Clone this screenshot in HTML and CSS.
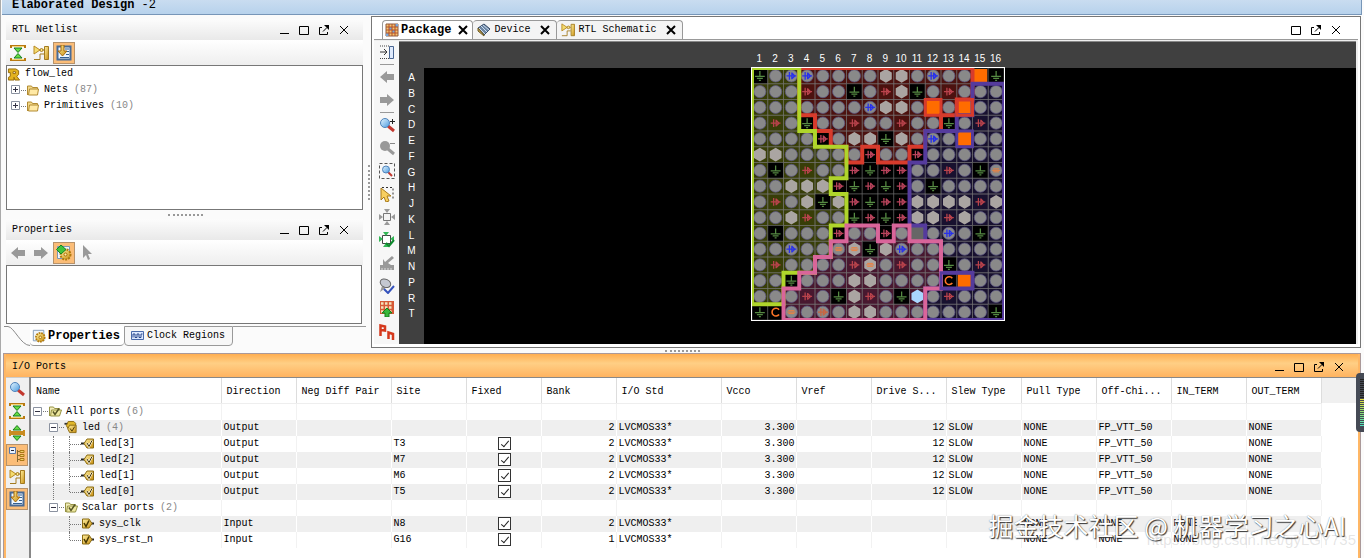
FILE: index.html
```html
<!DOCTYPE html>
<html lang="en">
<head>
<meta charset="utf-8">
<title>Elaborated Design</title>
<link rel="stylesheet" href="styles.css">
</head>
<body>
<svg class="defs" aria-hidden="true">
  <defs>
    <linearGradient id="gold" x1="0" y1="0" x2="1" y2="1"><stop offset="0" stop-color="#fff0a0"/><stop offset="1" stop-color="#c98f12"/></linearGradient>
    <linearGradient id="lens" x1="0" y1="0" x2="1" y2="1"><stop offset="0" stop-color="#e6f6ff"/><stop offset="1" stop-color="#4b9be0"/></linearGradient>
  </defs>
  <symbol id="min" viewBox="0 0 12 12"><path d="M2 9.500h9" stroke="#000"/></symbol>
  <symbol id="max" viewBox="0 0 12 12"><path d="M1.500 2.500h9v8h-9z" fill="none" stroke="#000"/></symbol>
  <symbol id="pop" viewBox="0 0 12 12"><path d="M4 3.500H1.500v7h8V8M5 7.500l4-4" fill="none" stroke="#000"/><path d="M6 1h5v5z"/></symbol>
  <symbol id="close" viewBox="0 0 12 12"><path d="M2 2l8 8M10 2l-8 8" stroke="#000"/></symbol>
  <symbol id="closeb" viewBox="0 0 12 12"><path d="M2 2l8 8M10 2l-8 8" stroke="#000" stroke-width="2"/></symbol>
  <symbol id="collapse" viewBox="0 0 16 16"><path d="M1 3V1h14v2M1 13v2h14v-2" fill="none" stroke="#b87912" stroke-width="2"/><path d="M2 1.500h12M2 14.500h12" stroke="#f8d775"/><path d="M4 3h8L8 7.500zM4 13h8L8 8.500z" fill="#65dc43" stroke="#187d1e"/></symbol>
  <symbol id="expand" viewBox="0 0 16 16"><path d="M1 5v2h14V5M1 11V9h14v2" fill="none" stroke="#c98c22" stroke-width="2"/><path d="M4 5h8L8 .5zM4 11h8l-4 4.500z" fill="#65dc43" stroke="#187d1e"/></symbol>
  <symbol id="schem" viewBox="0 0 16 16"><path d="M7 5h4M1 14.500h6V9h4" fill="none" stroke="#a37b20"/><path d="M1 1v8l6-4z" fill="#f4dc71" stroke="#b88922"/><circle cx="8.500" cy="5" r="1.500" fill="#ffe98c" stroke="#a37b20"/><path d="M11.500 1.500h4v13h-4z" fill="url(#gold)" stroke="#a37b20"/></symbol>
  <symbol id="autofit" viewBox="0 0 16 16"><path d="M1.500 1.500h13v13h-13z" fill="#edf6ff" stroke="#486b96" stroke-width="2"/><path d="M9 4h4M9 6.500h4M4 12.500h9M10 9.500h3" stroke="#345f91"/><path d="M5 0h3v6h3L6.500 11 2 6h3z" fill="url(#gold)" stroke="#a86808"/></symbol>
  <symbol id="left" viewBox="0 0 16 16"><path d="M1 8l7-6v3h7v6H8v3z" fill="#999"/></symbol>
  <symbol id="right" viewBox="0 0 16 16"><path d="M15 8L8 2v3H1v6h7v3z" fill="#999"/></symbol>
  <symbol id="pointer" viewBox="0 0 16 16"><path d="M4 0v13l3-3 2 5 2-1-2-5h4z" fill="#999"/></symbol>
  <symbol id="gear" viewBox="0 0 16 16"><path d="M1.500 1.500h12v12h-12z" fill="#eff5fc" stroke="#7c96b4"/><circle cx="9.500" cy="9.500" r="5" fill="url(#gold)" stroke="#b37a0d" stroke-width="2" stroke-dasharray="2 1"/><circle cx="9.500" cy="9.500" r="1.500" fill="#fff3b0" stroke="#a76c08"/></symbol>
  <symbol id="gearon" viewBox="0 0 16 16"><use href="#gear"/><path d="M5 0l5 4.500L5 9 .5 4.500z" fill="#3fc43b" stroke="#168221"/></symbol>
  <symbol id="rtl" viewBox="0 0 14 14"><path d="M1 1h8l3 2v4l-2 2 3 4H8L7 10v3H1v-3l2-1V5H1z" fill="#e3b31f" stroke="#936909"/><path d="M6 4h2.500v2H6z" fill="#fff" stroke="#936909"/></symbol>
  <symbol id="folder" viewBox="0 0 14 12"><path d="M1.500 10.500v-9h4l1 1.500h5v2" fill="#f3d98b" stroke="#b28b32"/><path d="M3.500 4.500h9l-1 6h-9z" fill="#ffe9a5" stroke="#b28b32"/></symbol>
  <symbol id="folderok" viewBox="0 0 14 12"><path d="M1.500 10.500v-9h4l1 1.500h5v2" fill="#f3edbb" stroke="#969344"/><path d="M3.500 4.500h10l-2 6h-9z" fill="#eee8a0" stroke="#969344"/><path d="M5 6l2 3 4-6" fill="none" stroke="#555425" stroke-width="1.500"/></symbol>
  <symbol id="bus" viewBox="0 0 14 14"><path d="M0 3h4" stroke="#333" stroke-width="2"/><path d="M4 .500h6l2 2v6H4L2 5z" fill="#e0b72b" stroke="#8a6a10"/><path d="M5.500 4.500h7v8h-7l-2-4z" fill="url(#gold)" stroke="#8a6a10"/><path d="M6 8l2 3 3-5" fill="none" stroke="#443500"/></symbol>
  <symbol id="outp" viewBox="0 0 14 12"><path d="M0 6h4" stroke="#222" stroke-width="2"/><path d="M6 1.500h6.500v9H6L3 6z" fill="url(#gold)" stroke="#8a6a10"/><path d="M6 5.500L8 9l3-6" fill="none" stroke="#fff" stroke-width="2"/><path d="M6 5.500L8 9l3-6" fill="none" stroke="#443500"/></symbol>
  <symbol id="inp" viewBox="0 0 14 12"><path d="M9 6h4" stroke="#222" stroke-width="2"/><path d="M1.500 1.500H8L11 6l-3 4.500H1.500z" fill="url(#gold)" stroke="#8a6a10"/><path d="M3 5.500L5 9l3-6" fill="none" stroke="#443500" stroke-width="1.500"/></symbol>
  <symbol id="plus" viewBox="0 0 10 10"><path d="M.5.5h8v8h-8z" fill="#fff" stroke="#8b92a0"/><path d="M2 4.500h5M4.500 2v5" stroke="#334"/></symbol>
  <symbol id="minus" viewBox="0 0 10 10"><path d="M.5.5h8v8h-8z" fill="#fff" stroke="#8b92a0"/><path d="M2 4.500h5" stroke="#334"/></symbol>
  <symbol id="wave" viewBox="0 0 14 10"><path d="M.5.5h12v8H.5z" fill="#dbe8ff" stroke="#4969aa"/><path d="M2 6.500V3h2v3.500h2V3h2v3.500h2V3h1.500" fill="none" stroke="#29468c"/></symbol>
  <symbol id="package" viewBox="0 0 14 14"><path d="M1 1h12v12H1z" fill="#f5c36f" stroke="#8e5d42"/><path d="M4 4h3v3H4zM7 7h3v3H7zM10 1h3v3h-3zM1 10h3v3H1z" fill="#78a9da"/><path d="M1 4h12M1 7h12M1 10h12M4 1v12M7 1v12M10 1v12" stroke="#b4532a"/></symbol>
  <symbol id="device" viewBox="0 0 14 14"><path d="M1 5l6-4 6 5-6 6z" fill="#6c86a4" stroke="#354a66"/><path d="M1 5v3l6 5v-1z" fill="#c7a14b" stroke="#6b5a24"/><path d="M4 3l6 6M6 2l6 5M2 5l6 6" stroke="#cdddf0"/></symbol>
  <symbol id="find" viewBox="0 0 16 16"><path d="M9 9l6 5" stroke="#c2382f" stroke-width="3"/><circle cx="6" cy="6" r="4.500" fill="url(#lens)" stroke="#4f83bb"/></symbol>
  <symbol id="zin" viewBox="0 0 16 16"><use href="#find"/><path d="M11 4.500h5M13.500 2v5" stroke="#222"/></symbol>
  <symbol id="zout" viewBox="0 0 16 16"><path d="M9 9l6 5" stroke="#999" stroke-width="3"/><circle cx="6" cy="6" r="5" fill="#999"/><path d="M11 3.500h5" stroke="#888"/></symbol>
  <symbol id="zfit" viewBox="0 0 16 16"><path d="M.5.5h15v15H.5z" fill="none" stroke="#555" stroke-dasharray="3 2"/><path d="M9 9l4 4" stroke="#c2382f" stroke-width="2"/><circle cx="7" cy="6.500" r="3.500" fill="url(#lens)" stroke="#4f83bb"/></symbol>
  <symbol id="select" viewBox="0 0 16 16"><path d="M3 1.500h11v11" fill="none" stroke="#333" stroke-dasharray="2 2"/><path d="M2 2v12l3-3 2 5 3-1-2-5h4z" fill="#f8cf5f" stroke="#a97b1b"/></symbol>
  <symbol id="fitg" viewBox="0 0 16 16"><path d="M4.500 4.500h7v7h-7z" fill="#f3f3f3" stroke="#777"/><path d="M5 0h6L8 4zM5 16h6l-3-4zM0 5v6l4-3zM16 5v6l-4-3z" fill="#999"/></symbol>
  <symbol id="fitok" viewBox="0 0 16 16"><path d="M3.500 3.500h8v8h-8z" fill="#fff" stroke="#444"/><path d="M4 0h6L7 4zM4 15h6l-3-4zM0 4v6l4-3zM15 4v5l-4-2z" fill="#32b655"/><path d="M7 11l3 3 5-6" fill="none" stroke="#0c8a2c" stroke-width="2"/></symbol>
  <symbol id="place" viewBox="0 0 16 16"><path d="M1 10h14v5H1zM4 4l2 3 7-6 2 2-6 5 3 2H4z" fill="#999"/><path d="M3 15v-2M6 15v-2M9 15v-2M12 15v-2" stroke="#ddd"/></symbol>
  <symbol id="pin" viewBox="0 0 16 16"><path d="M3 8l-2 6 7-5z" fill="#999"/><ellipse cx="6.500" cy="5" rx="5.500" ry="4" fill="#c4c8d1" stroke="#666" transform="rotate(25 6 5)"/><path d="M5 11l4 4 6-7" fill="none" stroke="#3553bd" stroke-width="2"/></symbol>
  <symbol id="pins" viewBox="0 0 16 16"><path d="M1 0h14v13H1z" fill="#d65a37"/><path d="M2 2.500h12M2 6.500h12M2 10.500h12" stroke="#f5e3bc" stroke-width="2.500" stroke-dasharray="2.500 1.500"/><path d="M8 7l5 5h-3v4H6v-4H3z" fill="#39b83b" stroke="#14801c"/></symbol>
  <symbol id="ab" viewBox="0 0 16 16"><path d="M1.500 12V1.500L6 2.500v4L2 6M9.500 15V8.500l4.500 1.500v6" fill="none" stroke="#d5391d" stroke-width="2.500"/></symbol>
  <symbol id="dock" viewBox="0 0 16 16"><path d="M1 2h9M1 14.500h9" stroke="#444" stroke-dasharray="1 1"/><path d="M1 8h6M5 5l3 3-3 3" fill="none" stroke="#333"/><path d="M10.500 2.500h4v12h-4z" fill="#dfeafc" stroke="#496591"/></symbol>
  <symbol id="tree" viewBox="0 0 16 16"><path d="M.5.5h6v6h-6z" fill="#e8f1ff" stroke="#5977a7"/><path d="M2 3.500h3" stroke="#223"/><path d="M8.500 3v12M8 4.500h3M8 8.500h3M8 12.500h3" fill="none" stroke="#8a6a30"/><path d="M11 3.500h4v2h-4zM11 7.500h4v2h-4zM11 11.500h4v2h-4z" fill="#f2cf6a" stroke="#a97816"/></symbol>
</svg>

<header class="strip"><b>Elaborated Design</b> -2</header>

<main class="work">
  <div class="side">
    <section class="pane netlist">
      <header class="bar"><h2>RTL Netlist</h2><span class="wins"><button aria-label="Minimize"><svg><use href="#min"/></svg></button><button aria-label="Maximize"><svg><use href="#max"/></svg></button><button aria-label="Float"><svg><use href="#pop"/></svg></button><button aria-label="Close"><svg><use href="#close"/></svg></button></span></header>
      <div class="tools"><button aria-label="Collapse all"><svg><use href="#collapse"/></svg></button><button aria-label="Schematic"><svg><use href="#schem"/></svg></button><button class="on" aria-label="Scroll to selected"><svg><use href="#autofit"/></svg></button></div>
      <div class="box tree">
        <div class="node"><svg class="ic"><use href="#rtl"/></svg><span class="label">flow_led</span></div>
        <div class="node child"><svg class="tg"><use href="#plus"/></svg><i class="dash"></i><svg class="ic"><use href="#folder"/></svg><span class="label">Nets <em>(87)</em></span></div>
        <div class="node child"><svg class="tg"><use href="#plus"/></svg><i class="dash"></i><svg class="ic"><use href="#folder"/></svg><span class="label">Primitives <em>(10)</em></span></div>
      </div>
    </section>
    <div class="grip"></div>
    <section class="pane">
      <header class="bar"><h2>Properties</h2><span class="wins"><button aria-label="Minimize"><svg><use href="#min"/></svg></button><button aria-label="Maximize"><svg><use href="#max"/></svg></button><button aria-label="Float"><svg><use href="#pop"/></svg></button><button aria-label="Close"><svg><use href="#close"/></svg></button></span></header>
      <div class="tools"><button aria-label="Back"><svg><use href="#left"/></svg></button><button aria-label="Forward"><svg><use href="#right"/></svg></button><button class="on" aria-label="Auto update"><svg><use href="#gearon"/></svg></button><button aria-label="Select"><svg><use href="#pointer"/></svg></button></div>
      <div class="box blank"></div>
    </section>
    <nav class="btabs">
      <svg class="slant" viewBox="0 0 26 20"><path d="M0 .5h4C10 1 17 19.500 26 19.500" fill="none" stroke="#8a8a8a"/></svg>
      <button class="btab cur"><svg><use href="#gear"/></svg>Properties</button>
      <button class="btab"><svg><use href="#wave"/></svg>Clock Regions</button>
      <span class="rest"></span>
    </nav>
  </div>
  <div class="vgrip"></div>
  <section class="editor">
    <header class="tabs">
      <div class="tab cur"><svg><use href="#package"/></svg><span>Package</span><button aria-label="Close Package"><svg><use href="#closeb"/></svg></button></div>
      <div class="tab"><svg><use href="#device"/></svg><span>Device</span><button aria-label="Close Device"><svg><use href="#closeb"/></svg></button></div>
      <div class="tab"><svg><use href="#schem"/></svg><span>RTL Schematic</span><button aria-label="Close RTL Schematic"><svg><use href="#closeb"/></svg></button></div>
      <span class="wins"><button aria-label="Maximize"><svg><use href="#max"/></svg></button><button aria-label="Float"><svg><use href="#pop"/></svg></button><button aria-label="Close"><svg><use href="#close"/></svg></button></span>
    </header>
    <div class="stage">
      <div class="vtools">
        <button aria-label="Dock"><svg><use href="#dock"/></svg></button><hr>
        <button aria-label="Back"><svg><use href="#left"/></svg></button>
        <button aria-label="Forward"><svg><use href="#right"/></svg></button><hr>
        <button aria-label="Zoom in"><svg><use href="#zin"/></svg></button>
        <button aria-label="Zoom out"><svg><use href="#zout"/></svg></button>
        <button aria-label="Zoom fit"><svg><use href="#zfit"/></svg></button>
        <button aria-label="Select area"><svg><use href="#select"/></svg></button>
        <button aria-label="Fit selection"><svg><use href="#fitg"/></svg></button>
        <button aria-label="Auto fit selection"><svg><use href="#fitok"/></svg></button>
        <button aria-label="Place"><svg><use href="#place"/></svg></button>
        <button aria-label="Check pin"><svg><use href="#pin"/></svg></button>
        <button aria-label="Show pins"><svg><use href="#pins"/></svg></button>
        <button aria-label="Show names"><svg><use href="#ab"/></svg></button>
      </div>
      <div class="view">
        <div class="cols" id="cols"></div>
        <div class="rows" id="rows"></div>
        <div class="canvas"><svg class="die" id="die" viewBox="0 0 256 256"></svg></div>
      </div>
    </div>
  </section>
</main>
<div class="grip wide"></div>

<section class="ports">
  <header class="bar hot"><h2>I/O Ports</h2><span class="wins"><button aria-label="Minimize"><svg><use href="#min"/></svg></button><button aria-label="Maximize"><svg><use href="#max"/></svg></button><button aria-label="Float"><svg><use href="#pop"/></svg></button><button aria-label="Close"><svg><use href="#close"/></svg></button></span></header>
  <div class="pbody">
    <div class="ptools">
      <button aria-label="Search"><svg><use href="#find"/></svg></button>
      <button aria-label="Collapse all"><svg><use href="#collapse"/></svg></button>
      <button aria-label="Expand all"><svg><use href="#expand"/></svg></button>
      <button class="on" aria-label="Group"><svg><use href="#tree"/></svg></button>
      <button aria-label="Schematic"><svg><use href="#schem"/></svg></button>
      <button class="on" aria-label="Scroll to selected"><svg><use href="#autofit"/></svg></button>
    </div>
    <div class="sheet">
      <table>
        <colgroup><col class="w190"><col class="w75"><col class="w95"><col class="w75"><col class="w75"><col class="w75"><col class="w105"><col class="w75"><col class="w75"><col class="w75"><col class="w75"><col class="w75"><col class="w75"><col class="w75"><col class="w75"><col></colgroup>
        <thead><tr><th>Name</th><th>Direction</th><th>Neg Diff Pair</th><th>Site</th><th>Fixed</th><th>Bank</th><th>I/O Std</th><th>Vcco</th><th>Vref</th><th>Drive S...</th><th>Slew Type</th><th>Pull Type</th><th>Off-Chi...</th><th>IN_TERM</th><th>OUT_TERM</th><th class="fill"></th></tr></thead>
        <tbody id="ports"></tbody>
      </table>
      <div class="mark">掘金技术社区 @ 机器学习之心AI</div>
      <div class="url">https://blog.csdn.net/gyLGY735</div>
    </div>
  </div>
</section>
<div class="meter"><i></i></div>
<script src="app.js"></script>
</body>
</html>
```
FILE: styles.css
```css
* { box-sizing: border-box; }
body {
  margin: 0;
  height: 100vh;
  display: flex;
  flex-direction: column;
  overflow: hidden;
  background: #fbfbfb;
  border-left: 1px solid #aaa;
  color: #000;
  font: 10px/16px "Liberation Mono", "Noto Sans CJK SC", monospace;
}
svg { display: block; flex: none; }
.defs { position: absolute; width: 0; height: 0; }
button {
  display: flex;
  align-items: center;
  justify-content: center;
  margin: 0;
  padding: 0;
  border: 0;
  background: none;
  font: inherit;
  color: inherit;
}
h2 { margin: 0; font: inherit; }
em { font-style: normal; color: #888; }

.strip {
  flex: none;
  height: 15px;
  margin: 0 2px 0 1px;
  padding-left: 10px;
  line-height: 10px;
  background: linear-gradient(#c9dcf0, #b7d2ec);
  border-bottom: 1px solid #7796b8;
  border-right: 1px solid #7796b8;
  font-size: 12px;
}

.work { flex: none; display: flex; height: 333px; padding: 1px 3px 0 3px; }
.side { flex: none; width: 362px; display: flex; flex-direction: column; }
.pane { padding: 0 3px 0 2px; }
.netlist { flex: 1; display: flex; flex-direction: column; padding-top: 3px; }
.bar {
  flex: none;
  display: flex;
  align-items: center;
  justify-content: space-between;
  height: 21px;
  padding: 0 9px 0 6px;
  background: linear-gradient(#fcfcfc, #e9e9e9);
}
.wins { display: flex; }
.wins button { width: 20px; height: 18px; }
.wins svg { width: 12px; height: 12px; }
.tools { display: flex; height: 25px; align-items: center; gap: 1px; padding-left: 1px; background: linear-gradient(#fff, #eee); }
.tools button { width: 22px; height: 22px; border: 1px solid transparent; }
.tools svg, .vtools svg, .ptools svg { width: 16px; height: 16px; }
.tools .on, .ptools .on { background: #fbbd78; border: 1px solid #b6926b; }
.box { border: 1px solid #777; background: #fff; }
.tree { flex: 1; }
.blank { height: 59px; margin-right: 1px; }
.node { display: flex; align-items: center; height: 16px; }
.child { padding-left: 4px; }
.ic { width: 14px; height: 13px; }
.tg { width: 10px; height: 10px; }
.dash { width: 5px; border-top: 1px dotted #777; }
.label { padding-left: 4px; white-space: pre; }
.grip { flex: none; display: flex; justify-content: center; align-items: center; height: 9px; }
.grip::after { content: ""; width: 35px; border-top: 2px dotted #999; }
.wide { height: 5px; }
.vgrip { flex: none; width: 5px; display: flex; align-items: center; justify-content: center; }
.vgrip::after { content: ""; height: 35px; border-left: 2px dotted #999; }

.btabs { flex: none; display: flex; height: 22px; margin-top: 2px; }
.slant { width: 26px; height: 20px; }
.btab { height: 20px; gap: 2px; padding: 0 7px 0 6px; border: 1px solid #999; border-radius: 0 0 4px 4px; background: #f7f7f7; }
.btab svg { width: 14px; height: 14px; }
.btab.cur { padding: 0 4px 0 2px; border-width: 0 0 1px; background: #fff; font-weight: bold; font-size: 12px; }
.rest { flex: 1; border-top: 1px solid #999; }

.editor { flex: 1; min-width: 0; display: flex; flex-direction: column; border: 1px solid #777; background: #fff; padding: 0 2px 3px 2px; }
.tabs { display: flex; align-items: flex-end; height: 23px; padding-left: 8px; border-bottom: 1px solid #999; }
.tab { display: flex; align-items: center; height: 19px; gap: 3px; padding: 0 3px 0 4px; border: 1px solid #999; border-left-width: 0; border-bottom: 0; border-radius: 4px 4px 0 0; background: #f4f4f4; }
.tab svg { width: 14px; height: 14px; }
.tab.cur { border-left-width: 1px; padding: 0 1px 0 2px; gap: 2px; background: #fff; font-weight: bold; font-size: 12px; }
.tab button { width: 16px; height: 16px; margin-left: 4px; }
.tab.cur button { margin-left: 2px; }
.tab button svg { width: 12px; height: 12px; }
.tabs .wins { margin-left: auto; padding-right: 12px; }
.stage { flex: 1; display: flex; min-height: 0; padding-top: 1px; background: #eee; }
.vtools { width: 25px; flex: none; display: flex; flex-direction: column; align-items: center; gap: 1px; background: #f7f7f7; }
.vtools button { width: 22px; height: 22px; }
.vtools hr { width: 14px; margin: 0; border: 0; border-top: 1px solid #999; }
.view { flex: 1; display: grid; grid-template: 26px 1fr / 25px 1fr; background: #404040; border-top: 1px solid #888; margin-right: 2px; font: 10px/15px "Liberation Sans", sans-serif; color: #fff; }
.cols { grid-column: 1 / 3; width: 252px; margin: 9px auto 0; display: grid; grid-template-columns: repeat(16, 1fr); text-align: center; }
.rows { height: 254px; padding-top: 2px; display: grid; grid-template-rows: repeat(16, 1fr); text-align: center; }
.canvas { display: flex; justify-content: center; padding-right: 24px; background: #000; }
.die { width: 254px; height: 254px; border: 1px solid #fff; margin-top: -1px; }

.ports { flex: 1; min-height: 0; display: flex; flex-direction: column; margin: 0 3px 0 2px; border: 1px solid #a99; border-bottom: 0; background: #ffb765; padding: 0 2px; }
.hot { height: 23px; padding: 2px 9px 0 6px; background: linear-gradient(#ffae50, #ffcf85 40%, #ffb360); }
.pbody { flex: 1; min-height: 0; display: flex; }
.ptools { flex: none; width: 23px; background: #f0f0f0; display: flex; flex-direction: column; border-top: 1px solid #ccc; }
.ptools button { width: 22px; height: 22px; border: 1px solid transparent; }
.sheet { flex: 1; min-width: 0; position: relative; overflow: hidden; background: #fff; border: solid #888; border-width: 1px 0 0 2px; }
table { width: 100%; table-layout: fixed; border-collapse: collapse; }
.w190 { width: 190px; } .w75 { width: 75px; } .w95 { width: 95px; } .w105 { width: 105px; }
th { height: 25px; padding: 3px 0 0 5px; font-weight: normal; text-align: left; border-right: 1px solid #ddd; border-bottom: 1px solid #eee; white-space: nowrap; }
th.fill { background: #f0f0f0; border: 0; }
td { height: 16px; padding: 0 1px 0 2px; white-space: nowrap; border-right: 1px solid #f2f2f2; }
.alt td { background: #efefef; border-right-color: #fff; }
.alt td:last-child, td:last-child { background: #fff; border: 0; }
td.num { text-align: right; }
.name { display: flex; align-items: center; height: 16px; }
.gap, .line, .elbow { position: relative; width: 16px; height: 16px; flex: none; }
.line::before, .elbow::before { content: ""; position: absolute; left: 4px; top: 0; height: 16px; border-left: 1px dotted #777; }
.elbow::after { content: ""; position: absolute; left: 5px; top: 8px; width: 11px; border-top: 1px dotted #777; }
.elbow.end::before { height: 8px; }
input[type="checkbox"] { appearance: none; display: block; position: relative; width: 13px; height: 13px; margin: 0 auto; border: 1px solid #333; background: #fff; }
input[type="checkbox"]::after { content: ""; position: absolute; left: 4px; top: 1px; width: 3px; height: 7px; border: solid #222; border-width: 0 1px 1px 0; transform: rotate(40deg); }
.mark { position: absolute; right: 12px; bottom: 16px; font: 25px/34px "Noto Sans CJK SC", sans-serif; color: #fff; text-shadow: 1px 1px 1px #333, 0 0 1px #777; white-space: nowrap; }
.url { position: absolute; right: 2px; bottom: 8px; font: 15px/20px "Liberation Sans", sans-serif; color: rgba(120, 120, 120, .2); }
.meter { position: absolute; right: 0; top: 373px; width: 8px; height: 59px; padding: 6px 0 6px 4px; background: #454a55; border-radius: 4px 0 0 4px; }
.meter i { display: block; height: 100%; background: repeating-linear-gradient(transparent 0 1px, #454a55 1px 2px), linear-gradient(#222 42%, #e8e040 43%, #8fe070 70%, #50e0c0); }
```
FILE: app.js
```js
const letters = "ABCDEFGHJKLMNPRT";

/* Ball types: o user pin, h multi-function, b vref, g ground, r/k supply,
   O placed port, C config, G reserved, L clock, n/e/m special. */
const balls = [
  "gobboooohhobooOg",
  "oooroogorhgorooo",
  "ooooooobhhoOoOoo",
  "orogoorooroogoro",
  "ooookohhghoboOoo",
  "hhoooookookooooo",
  "ogorookgkkoorogn",
  "oohhhkgkgkogoooo",
  "orohghkgkkhhhhrh",
  "oohroogkgkhhrhoo",
  "ogoookookoGobogo",
  "oobooneghboooooo",
  "orooooreoroogoro",
  "oogooohhooooCOoo",
  "oooroghrogLorooo",
  "gCnomohhooooooog"
];

/* Bank outlines in cell units: path, fill, stroke. */
const regions = [
  ["M3 0H14V2H13V3H12V4H11V5H10V6H8V5H7V6H6V5H5V4H4V3H3Z", "#4c120f", "#d73b2c"],
  ["M14 1H16V16H11V14H14V13H12V11H11V10H10V6H11V4H13V3H14Z", "#18112f", "#553b9d"],
  ["M0 0H3V4H4V5H6V7H5V8H6V10H5V12H4V13H2V15H0Z", "#383e08", "#afd52b"],
  ["M6 10H8V11H9V10H10V11H12V14H11V16H2V14H3V13H4V12H5V11H6Z", "#48182f", "#d9659a"]
];
const scale = d => d.replace(/\d+/g, n => n * 16);

function ball(type, x, y) {
  const circle = '<circle cx="8" cy="8" r="6.2" fill="#898989" stroke="#5a5680" stroke-width=".8"/>';
  const hex = '<path d="M8 1l6 3.500v7L8 15l-6-3.500v-7z" fill="#aaa5a2"/>';
  const supply = c => `<path d="M3 8h10M6 4v8M8.500 4.500v7M8.500 5l3 3-3 3" fill="none" stroke="${c}" stroke-width="1.300"/>`;
  const dash = '<path d="M4 8h8M5 6.500h6M5 9.500h6" stroke="#ec8140"/>';
  const shapes = {
    o: circle,
    h: hex,
    b: circle + supply("#2730ec"),
    g: '<path d="M0 0h16v16H0z"/><path d="M8 3v5M3 8.500h10M5 10.500h6M7 12.500h2" stroke="#568a43" stroke-width="1.300"/>',
    r: supply("#b9434c"),
    k: '<path d="M0 0h16v16H0z"/>' + supply("#b8435b"),
    O: '<path d="M1 1h14v14H1z" fill="#ff6c00"/>',
    C: '<path d="M0 0h16v16H0z"/><path d="M11.500 5.500A4 4 0 1 0 11.500 10.500" fill="none" stroke="#ff7628" stroke-width="1.600"/>',
    G: '<path d="M1 1h14v14H1z" fill="#666"/>',
    L: '<path d="M8 1l6 3.500v7L8 15l-6-3.500v-7z" fill="#a9d6ff"/>',
    n: circle + dash,
    e: hex + dash,
    m: circle + supply("#ca6540")
  };
  return `<g transform="translate(${x * 16} ${y * 16})">${shapes[type]}<path d="M0 0h16v16H0z" fill="none" stroke="#777" stroke-opacity=".5"/></g>`;
}

document.getElementById("die").innerHTML =
  '<path d="M0 0h256v256H0z"/>' +
  regions.map(r => `<path d="${scale(r[0])}" fill="${r[1]}"/>`).join("") +
  balls.map((row, y) => [...row].map((t, x) => ball(t, x, y)).join("")).join("") +
  regions.map(r => `<path d="${scale(r[0])}" fill="none" stroke="${r[2]}" stroke-width="4"/>`).join("") +
  '<path d="M176 32h16v16h-16zM192 32v16h16v-16zM208 32h16v16h-16z" fill="none" stroke="none"/>' +
  '<path d="M176 32h16v16h-16zM208 32h16v16h-16z" fill="none" stroke="#d73b2c" stroke-width="3"/>' +
  '<path d="M208 64h16v16h-16zM192 208h32v16h-32z" fill="none" stroke="#553b9d" stroke-width="3"/>';

document.getElementById("cols").innerHTML = balls.map((_, i) => `<span>${i + 1}</span>`).join("");
document.getElementById("rows").innerHTML = [...letters].map(l => `<span>${l}</span>`).join("");

const toggle = '<svg class="tg"><use href="#minus"/></svg><i class="dash"></i>';
const icon = id => `<svg class="ic"><use href="#${id}"/></svg>`;
const g = c => `<i class="${c}"></i>`;
const out = ["2", "LVCMOS33*", "3.300", "", "12", "SLOW", "NONE", "FP_VTT_50", "", "NONE"];
const inp = bank => [bank, "LVCMOS33*", "", "", "", "", "NONE", "NONE", "NONE", ""];
const none = Array(10).fill("");
const ports = [
  [toggle + icon("folderok"), "All ports <em>(6)</em>", "", "", none],
  [g("gap") + toggle + icon("bus"), "led <em>(4)</em>", "Output", "", out],
  [g("gap") + g("line") + g("elbow") + icon("outp"), "led[3]", "Output", "T3", out],
  [g("gap") + g("line") + g("elbow") + icon("outp"), "led[2]", "Output", "M7", out],
  [g("gap") + g("line") + g("elbow") + icon("outp"), "led[1]", "Output", "M6", out],
  [g("gap") + g("line") + g("elbow end") + icon("outp"), "led[0]", "Output", "T5", out],
  [g("gap") + toggle + icon("folderok"), "Scalar ports <em>(2)</em>", "", "", none],
  [g("gap") + g("gap") + g("elbow") + icon("inp"), "sys_clk", "Input", "N8", inp("2")],
  [g("gap") + g("gap") + g("elbow end") + icon("inp"), "sys_rst_n", "Input", "G16", inp("1")]
];
const numeric = [0, 2, 4];
document.getElementById("ports").innerHTML = ports.map(([lead, name, dir, site, rest], i) =>
  `<tr class="${i % 2 ? "alt" : ""}"><td><div class="name">${lead}<span class="label">${name}</span></div></td>` +
  `<td>${dir}</td><td></td><td>${site}</td><td>${site ? `<input type="checkbox" checked aria-label="${name} fixed">` : ""}</td>` +
  rest.map((v, n) => `<td class="${numeric.includes(n) ? "num" : ""}">${v}</td>`).join("") + "<td></td></tr>").join("");
```
